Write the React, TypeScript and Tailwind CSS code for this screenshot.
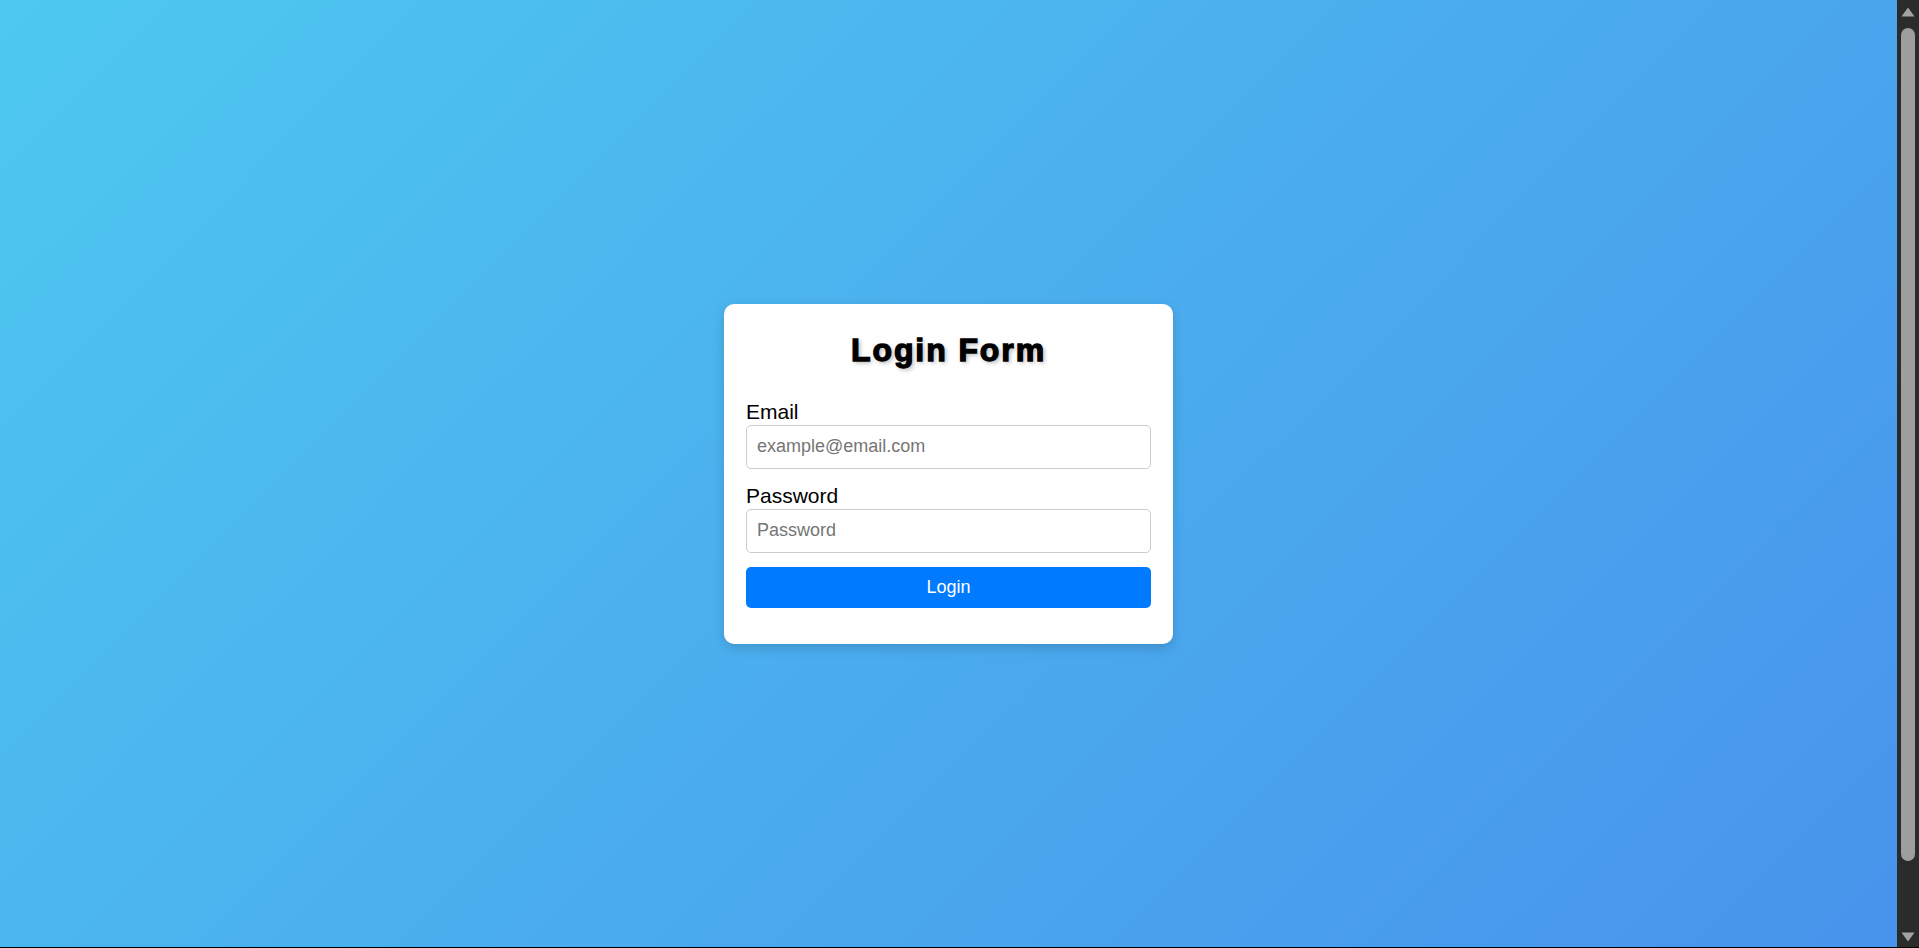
import React from 'react';

const inputClass =
  'block w-full h-[44px] px-[10px] text-[18px] border border-[#cccccc] rounded-[5px] bg-white outline-none placeholder:text-[#757575]';

const LoginForm: React.FC = () => {
  return (
    <div className="w-[449px] bg-white rounded-[10px] px-[22px] pt-[28px] pb-[36px] shadow-[0_4px_12px_rgba(0,0,0,0.15)]">
      <h2 className="text-center text-[32px] leading-[37px] font-bold tracking-[1.9px] text-black mb-[29px] [-webkit-text-stroke:1.3px_black] [text-shadow:2px_2px_4px_rgba(0,0,0,0.3)]">
        Login Form
      </h2>

      <form onSubmit={(e) => e.preventDefault()}>
        <div className="mb-[13px]">
          <label htmlFor="email" className="block text-[21px] leading-[27px] text-black">
            Email
          </label>
          <input id="email" type="email" placeholder="example@email.com" className={inputClass} />
        </div>

        <div className="mb-[14px]">
          <label htmlFor="password" className="block text-[21px] leading-[27px] text-black">
            Password
          </label>
          <input id="password" type="password" placeholder="Password" className={inputClass} />
        </div>

        <button type="submit" className="block w-full h-[41px] bg-[#007bff] text-white text-[18px] rounded-[5px]">
          Login
        </button>
      </form>
    </div>
  );
};

// browser scrollbar as it shows in the screenshot
const ScrollBar: React.FC = () => (
  <div className="w-[22px] bg-[#2b2b2b] flex flex-col items-center">
    <svg width="14" height="10" viewBox="0 0 14 10" className="mt-[7px]">
      <path d="M7 0.5 L13.5 9.5 L0.5 9.5 Z" fill="#a3a3a3" />
    </svg>
    <div className="mt-[11px] w-[14px] h-[833px] rounded-full bg-[#9e9e9e]" />
    <div className="flex-1" />
    <svg width="14" height="10" viewBox="0 0 14 10" className="mb-[5px]">
      <path d="M0.5 0.5 L13.5 0.5 L7 9.5 Z" fill="#a3a3a3" />
    </svg>
  </div>
);

export default function App() {
  return (
    <div className="h-screen flex flex-col overflow-hidden font-['Liberation_Sans',Arial,sans-serif]">
      <div className="flex-1 flex">
        <div className="flex-1 flex items-center justify-center bg-[linear-gradient(135deg,#4dc8f0,#4893ec)]">
          <LoginForm />
        </div>
        <ScrollBar />
      </div>
      <div className="h-px bg-black" />
    </div>
  );
}
